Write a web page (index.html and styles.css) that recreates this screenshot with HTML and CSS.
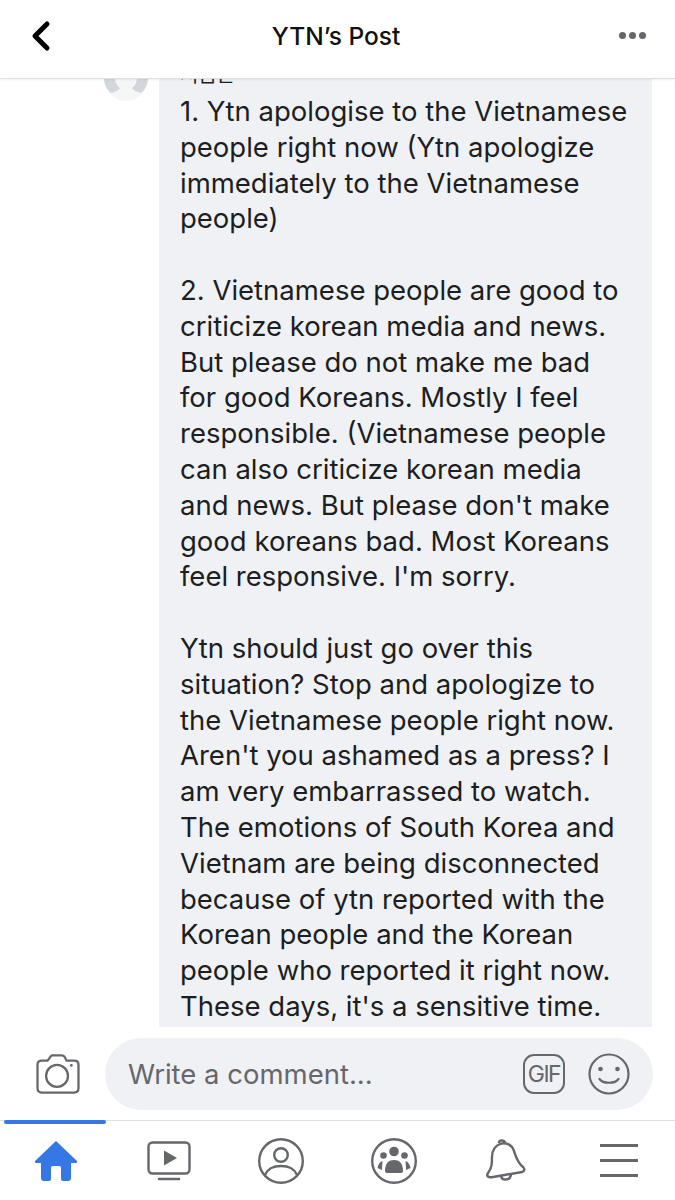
FILE: index.html
```html
<!DOCTYPE html>
<html lang="en">
<head>
    <meta charset="UTF-8">
    <meta name="viewport" content="width=device-width, initial-scale=1.0">
    <title>YTN's Post</title>
    <link rel="stylesheet" href="styles.css">
</head>
<body>
    <div class="app">
        <header class="top-bar">
            <svg class="back-icon" width="24" height="34" viewBox="0 0 24 34">
                <path d="M18 5 L6 17 L18 29" fill="none" stroke="#000" stroke-width="5" stroke-linecap="round" stroke-linejoin="round"/>
            </svg>
            <h1 class="top-title">YTN’s Post</h1>
            <div class="more-dots"><span></span><span></span><span></span></div>
        </header>

        <main class="thread">
            <svg class="avatar" width="44" height="44" viewBox="0 0 44 44">
                <circle cx="22" cy="22" r="22" fill="#f5f6f7"/>
                <path d="M0 20 H11 C11 26 13 29 16 31 C14 34 10 35 7 36 C3 33 0 27 0 20 Z" fill="#d3d6db"/>
                <path d="M44 20 H33 C33 26 31 29 28 31 C30 34 34 35 37 36 C41 33 44 27 44 20 Z" fill="#d3d6db"/>
            </svg>
            <div class="bubble">
                <div class="author">처음은</div>
                <p>1. Ytn apologise to the Vietnamese<br>people right now (Ytn apologize<br>immediately to the Vietnamese<br>people)</p>
                <p>2. Vietnamese people are good to<br>criticize korean media and news.<br>But please do not make me bad<br>for good Koreans. Mostly I feel<br>responsible. (Vietnamese people<br>can also criticize korean media<br>and news. But please don't make<br>good koreans bad. Most Koreans<br>feel responsive. I'm sorry.</p>
                <p>Ytn should just go over this<br>situation? Stop and apologize to<br>the Vietnamese people right now.<br>Aren't you ashamed as a press? I<br>am very embarrassed to watch.<br>The emotions of South Korea and<br>Vietnam are being disconnected<br>because of ytn reported with the<br>Korean people and the Korean<br>people who reported it right now.<br>These days, it's a sensitive time.</p>
            </div>
        </main>

        <section class="composer">
            <svg class="camera-icon" width="44" height="40" viewBox="0 0 46 42" fill="none" stroke="#65676b" stroke-width="2.4">
                <path d="M6 7 H12 L15 3 C15.5 2 16 1.5 17 1.5 H27 C28 1.5 29 2 30 3 L32 7 H40 C43 7 44.5 8.5 44.5 11 V36 C44.5 39 43 40.5 40 40.5 H6 C3 40.5 1.5 39 1.5 36 V11 C1.5 8.5 3 7 6 7 Z"/>
                <circle cx="22" cy="23" r="11.5"/>
                <circle cx="37" cy="12" r="1.5" fill="#65676b" stroke="none"/>
            </svg>
            <div class="comment-box">
                <span class="comment-hint">Write a comment...</span>
                <div class="comment-tools">
                    <span class="gif-btn">GIF</span>
                    <svg width="42" height="42" viewBox="0 0 42 42" fill="none" stroke="#65676b" stroke-width="2.2">
                        <circle cx="21" cy="21" r="19.5"/>
                        <circle cx="12.5" cy="16" r="2.3" fill="#65676b" stroke="none"/>
                        <circle cx="29.5" cy="16" r="2.3" fill="#65676b" stroke="none"/>
                        <path d="M11.5 26 C15 31 27 31 30.5 26" stroke-linecap="round"/>
                    </svg>
                </div>
            </div>
        </section>

        <nav class="tab-bar">
            <div class="tab active">
                <svg width="44" height="42" viewBox="0 0 44 42">
                    <path d="M22 1 L43 21 C43.5 22 43 23 42 23 H37 V38 C37 40 36 41 34 41 H29 C28 41 27 40 27 39 V28 C27 27 26.5 26 25.5 26 H18.5 C17.5 26 17 27 17 28 V39 C17 40 16 41 15 41 H10 C8 41 7 40 7 38 V23 H2 C1 23 .5 22 1 21 Z" fill="#3578e5"/>
                </svg>
            </div>
            <div class="tab">
                <svg width="44" height="40" viewBox="0 0 44 40" fill="none" stroke="#65676b" stroke-width="2.4">
                    <rect x="1.5" y="1.5" width="41" height="31" rx="4"/>
                    <path d="M17 9.5 L30 17 L17 24.5 Z" fill="#65676b" stroke="none"/>
                    <path d="M12 38 H32" stroke-width="2.6" stroke-linecap="round"/>
                </svg>
            </div>
            <div class="tab">
                <svg width="46" height="46" viewBox="0 0 46 46" fill="none" stroke="#65676b" stroke-width="2.4">
                    <circle cx="23" cy="23" r="21.8"/>
                    <circle cx="23" cy="17" r="6.8"/>
                    <path d="M7 37 C10 30 15 28 23 28 C31 28 36 30 39 37"/>
                </svg>
            </div>
            <div class="tab">
                <svg width="46" height="46" viewBox="0 0 46 46" fill="#65676b">
                    <circle cx="23" cy="23" r="21.8" fill="none" stroke="#65676b" stroke-width="2.4"/>
                    <circle cx="23" cy="13.5" r="4.8"/>
                    <circle cx="12.5" cy="17.5" r="3.3"/>
                    <circle cx="33.5" cy="17.5" r="3.3"/>
                    <path d="M14 33 C14 25 18 22 23 22 C28 22 32 25 32 33 C32 34 31 35 30 35 H16 C15 35 14 34 14 33 Z"/>
                    <path d="M11.5 23 C8.5 24 7 27 6.5 30 L11 32 C11 28 11.5 25 11.5 23 Z"/>
                    <path d="M34.5 23 C37.5 24 39 27 39.5 30 L35 32 C35 28 34.5 25 34.5 23 Z"/>
                </svg>
            </div>
            <div class="tab">
                <svg width="42" height="44" viewBox="0 0 42 44" fill="none" stroke="#65676b" stroke-width="2.4" stroke-linejoin="round">
                    <path d="M15 5 C20 3 27 5 29 12 C31 18 32 23 38 28 C40 30 40 32 37 33 L8 38 C3 39 1 37 3 34 C7 29 7 24 7 18 C7 11 10 7 15 5 Z"/>
                    <path d="M14 4 C14 .8 19 .8 20 3.5"/>
                    <path d="M16 37 C17 42 25 42 26 35.5"/>
                </svg>
            </div>
            <div class="tab">
                <div class="menu-lines"><span></span><span></span><span></span></div>
            </div>
        </nav>
    </div>
</body>
</html>
```

FILE: styles.css
```css
* {
    margin: 0;
    padding: 0;
    box-sizing: border-box;
}

body {
    font-family: Inter, "Noto Sans CJK KR", sans-serif;
    background: white;
    color: #1c1e21;
}

.app {
    height: 1200px;
    display: flex;
    flex-direction: column;
    overflow: hidden;
}

.top-bar {
    height: 79px;
    flex: none;
    display: flex;
    align-items: center;
    justify-content: space-between;
    padding: 0 29px;
    background: white;
    border-bottom: 1px solid #dddfe2;
    box-shadow: 0 1px 2px rgba(0,0,0,0.06);
    position: relative;
    z-index: 2;
}

.back-icon {
    margin-top: -6px;
}

.top-title {
    font-size: 24.5px;
    font-weight: 500;
    color: #111;
    margin-top: -6px;
}

.more-dots {
    display: flex;
    gap: 3px;
    margin-top: -7px;
}

.more-dots span {
    width: 7px;
    height: 7px;
    border-radius: 50%;
    background: #65676b;
}

.thread {
    flex: 1;
    min-height: 0;
    overflow: hidden;
    display: flex;
    align-items: flex-start;
    padding-left: 104px;
    gap: 11px;
}

.avatar {
    margin-top: -22px;
    flex: none;
}

.bubble {
    width: 493px;
    flex: none;
    height: 100%;
    background: #f0f1f5;
    padding-left: 21px;
    font-size: 27.5px;
    line-height: 35.8px;
    color: #1c1e21;
}

.author {
    margin-top: -21px;
    height: 36px;
    font-size: 20px;
}

.bubble p {
    margin-bottom: 35.8px;
    white-space: nowrap;
}

.composer {
    height: 94px;
    flex: none;
    display: flex;
    align-items: center;
    padding: 0 22px 0 36px;
    gap: 25px;
    background: white;
    border-bottom: 1px solid #dddfe2;
}

.camera-icon {
    flex: none;
}

.comment-box {
    flex: 1;
    height: 72px;
    border-radius: 36px;
    background: #f0f1f5;
    display: flex;
    align-items: center;
    justify-content: space-between;
    padding: 0 23px;
}

.comment-hint {
    font-size: 27.5px;
    color: #65676b;
}

.comment-tools {
    display: flex;
    align-items: center;
    gap: 23px;
}

.gif-btn {
    width: 42px;
    height: 40px;
    border: 2.4px solid #65676b;
    border-radius: 11px;
    font-size: 23px;
    letter-spacing: -1.5px;
    color: #65676b;
    display: flex;
    align-items: center;
    justify-content: center;
}

.tab-bar {
    height: 79px;
    flex: none;
    display: grid;
    grid-template-columns: repeat(6, 1fr);
}

.tab {
    display: flex;
    align-items: center;
    justify-content: center;
}

.tab.active {
    position: relative;
}

.tab.active::before {
    content: "";
    position: absolute;
    top: -1px;
    left: 4px;
    width: 102px;
    height: 4px;
    border-radius: 2px;
    background: #3578e5;
}

.menu-lines {
    width: 38px;
    display: flex;
    flex-direction: column;
    gap: 12.5px;
}

.menu-lines span {
    height: 2.5px;
    background: #65676b;
}
```
